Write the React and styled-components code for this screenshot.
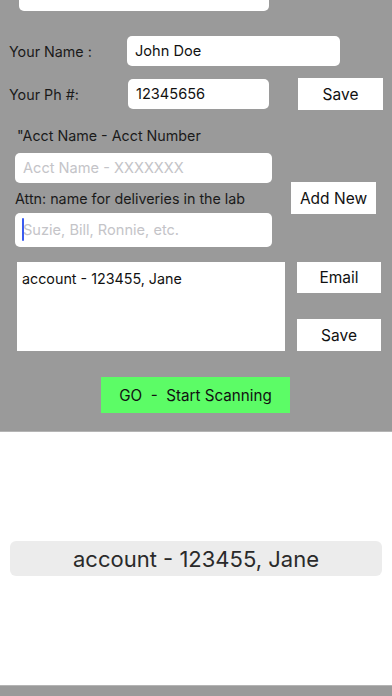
import React from 'react'
import styled, { createGlobalStyle } from 'styled-components'

const GlobalStyle = createGlobalStyle`
  html, body {
    margin: 0;
    padding: 0;
    background: #ffffff;
  }
  body {
    font-family: Inter, "Noto Sans", "Liberation Sans", sans-serif;
    color: #111;
  }
  * {
    box-sizing: border-box;
  }
`

const Screen = styled.div`
  width: 392px;
  height: 696px;
  display: flex;
  flex-direction: column;
  overflow: hidden;
`

const Panel = styled.div`
  height: 432px;
  background: #9a9a9a;
  border-bottom: 1px solid #b4b4b4;
  display: flex;
  flex-direction: column;
`

const TopField = styled.div`
  margin-left: 19px;
  width: 250px;
  height: 11px;
  background: #fff;
  border-radius: 0 0 5px 5px;
`

const Row = styled.div`
  display: flex;
  align-items: center;
  margin-top: ${p => p.$top}px;
`

const Label = styled.span`
  width: ${p => p.$w}px;
  padding-left: 9px;
  font-size: 14.3px;
  color: #1a1a1a;
`

const Input = styled.input`
  width: ${p => p.$w}px;
  height: ${p => p.$h || 30}px;
  border: none;
  outline: none;
  border-radius: 5px;
  background: #fff;
  padding: 0 8px;
  font-family: inherit;
  font-size: 14.6px;
  color: #111;
  &::placeholder {
    color: #c4c4c8;
  }
`

const Button = styled.button`
  width: ${p => p.$w || 85}px;
  height: ${p => p.$h || 32}px;
  margin-left: ${p => p.$left || 0}px;
  border: none;
  border-radius: 0;
  background: #fff;
  font-family: inherit;
  font-size: 15.5px;
  color: #111;
  padding: 0;
`

const AcctBlock = styled.div`
  display: flex;
  margin-top: 17px;
  padding-left: 15px;
`

const AcctColumn = styled.div`
  display: flex;
  flex-direction: column;
  width: 257px;
`

const SideColumn = styled.div`
  padding-top: 55px;
  margin-left: 19px;
`

const SmallLabel = styled.div`
  font-size: 14.3px;
  line-height: 18px;
  color: #1a1a1a;
  margin-top: ${p => p.$top || 0}px;
  padding-left: ${p => p.$indent || 0}px;
`

const FieldWrap = styled.div`
  position: relative;
  margin-top: ${p => p.$top}px;
`

const Caret = styled.span`
  position: absolute;
  left: 7px;
  top: 5px;
  width: 2px;
  height: 23px;
  background: #3a5bf0;
  border-radius: 1px;
`

const NotesRow = styled.div`
  display: flex;
  margin-top: 15px;
  padding-left: 17px;
`

const Notes = styled.textarea`
  width: 268px;
  height: 89px;
  border: none;
  outline: none;
  resize: none;
  border-radius: 0;
  padding: 8px 5px;
  font-family: inherit;
  font-size: 14.3px;
  line-height: 18px;
  color: #111;
  background: #fff;
`

const NotesButtons = styled.div`
  display: flex;
  flex-direction: column;
  justify-content: space-between;
  margin-left: 12px;
  height: 89px;
`

const GoButton = styled.button`
  margin: 26px 0 0 101px;
  width: 189px;
  height: 36px;
  border: none;
  background: #5cfc66;
  font-family: inherit;
  font-size: 15.2px;
  color: #111;
  padding: 0;
  white-space: pre;
`

const Result = styled.div`
  flex: 1;
  background: #fff;
  display: flex;
  align-items: center;
  justify-content: center;
`

const Pill = styled.div`
  width: 372px;
  height: 35px;
  border-radius: 6px;
  background: #ececec;
  display: flex;
  align-items: center;
  justify-content: center;
  font-size: 22px;
  color: #2a2a2a;
`

const BottomBar = styled.div`
  height: 11px;
  background: #9a9a9a;
  border-top: 1px solid #b4b4b4;
`

export default function App () {
  return (
    <Screen>
      <GlobalStyle />
      <Panel>
        <TopField />
        <Row $top={25}>
          <Label $w={127}>Your Name :</Label>
          <Input $w={213} defaultValue='John Doe' />
        </Row>
        <Row $top={12}>
          <Label $w={128}>Your Ph #:</Label>
          <Input $w={141} defaultValue='12345656' />
          <Button $left={29}>Save</Button>
        </Row>
        <AcctBlock>
          <AcctColumn>
            <SmallLabel $indent={2}>"Acct Name - Acct Number</SmallLabel>
            <FieldWrap $top={8}>
              <Input $w={257} placeholder='Acct Name - XXXXXXX' />
            </FieldWrap>
            <SmallLabel $top={7}>Attn: name for deliveries in the lab</SmallLabel>
            <FieldWrap $top={5}>
              <Input $w={257} $h={34} placeholder='Suzie, Bill, Ronnie, etc.' />
              <Caret />
            </FieldWrap>
          </AcctColumn>
          <SideColumn>
            <Button>Add New</Button>
          </SideColumn>
        </AcctBlock>
        <NotesRow>
          <Notes defaultValue='account - 123455, Jane' />
          <NotesButtons>
            <Button $w={84} $h={31}>Email</Button>
            <Button $w={84} $h={32}>Save</Button>
          </NotesButtons>
        </NotesRow>
        <GoButton>GO  -  Start Scanning</GoButton>
      </Panel>
      <Result>
        <Pill>account - 123455, Jane</Pill>
      </Result>
      <BottomBar />
    </Screen>
  )
}
